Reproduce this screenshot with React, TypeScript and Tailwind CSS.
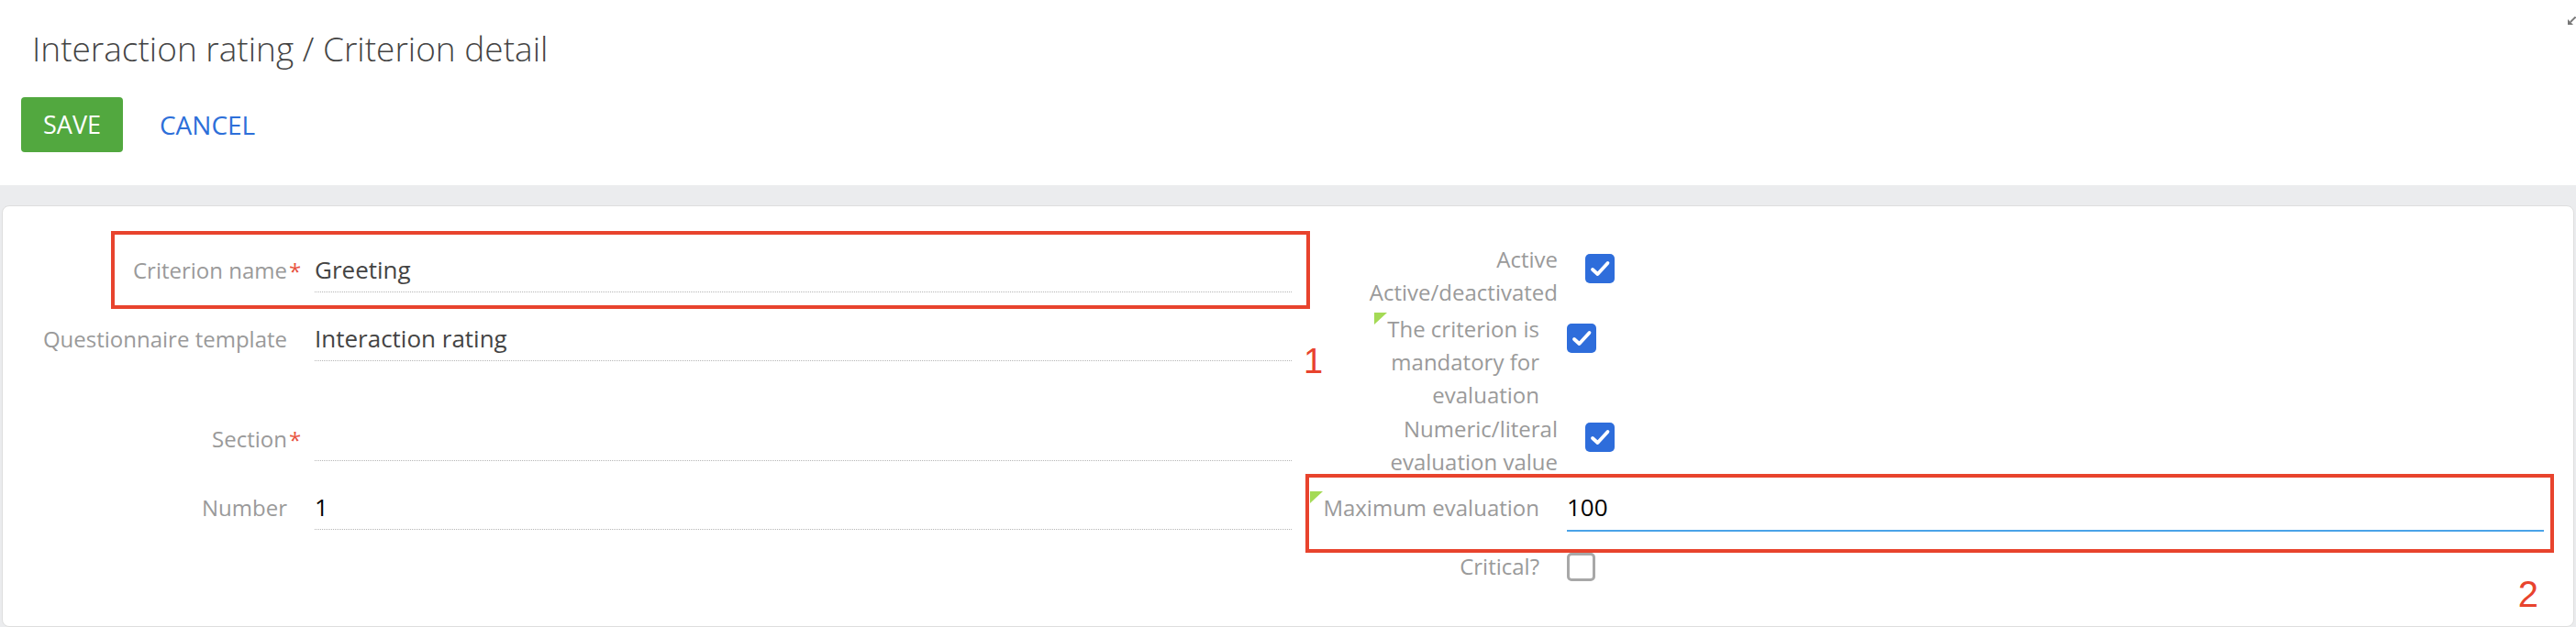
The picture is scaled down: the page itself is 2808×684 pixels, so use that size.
import type { ReactNode } from "react";

const labelText = "text-[24px] leading-[36px] text-[#9a9a9a]";
const redFrame = "pointer-events-none absolute border-4 border-[#e8432d]";
const annotation =
  "pointer-events-none absolute font-['Liberation_Sans',Arial,sans-serif] leading-none text-[#e8432d]";

function Required() {
  return <span className="absolute left-full top-0 ml-[2px] text-[#e8533f]">*</span>;
}

// little green marker shown before labels that carry a hint
function Hint() {
  return (
    <span className="relative inline-block h-0 w-0 align-top">
      <svg className="absolute right-0 top-0" width="14" height="13" viewBox="0 0 14 13">
        <polygon points="0,0 14,0 0,13" fill="#a4da55" />
      </svg>
    </span>
  );
}

function CheckBox({ checked, className = "" }: { checked: boolean; className?: string }) {
  if (!checked) {
    return (
      <span
        className={`block h-[31px] w-[31px] shrink-0 rounded-[5px] border-[3px] border-[#a8a8a8] bg-white ${className}`}
      />
    );
  }
  return (
    <span className={`block h-[32px] w-[32px] shrink-0 rounded-[5px] bg-[#2e6ddb] ${className}`}>
      <svg viewBox="0 0 32 32" className="h-full w-full">
        <path
          d="M8 17l5.5 5L24.5 10"
          fill="none"
          stroke="#fff"
          strokeWidth="3.8"
          strokeLinecap="round"
          strokeLinejoin="round"
        />
      </svg>
    </span>
  );
}

function TextRow({
  label,
  value,
  required,
  dark,
  className = "",
  children,
}: {
  label: string;
  value: string;
  required?: boolean;
  dark?: boolean;
  className?: string;
  children?: ReactNode;
}) {
  return (
    <div className={`relative flex items-baseline ${className}`}>
      <div className={`w-[270px] shrink-0 whitespace-nowrap text-right ${labelText}`}>
        <span className="relative">
          {label}
          {required && <Required />}
        </span>
      </div>
      <div
        className={`ml-[30px] flex-1 border-b border-dotted border-[#b5b5b5] pb-[6px] text-[26px] leading-[36px] ${
          dark ? "text-black" : "text-[#444]"
        }`}
      >
        {value || "\u00a0"}
      </div>
      {children}
    </div>
  );
}

function FlagRow({
  lines,
  checked,
  hint,
  className = "",
  boxClass,
}: {
  lines: string[];
  checked: boolean;
  hint?: boolean;
  className?: string;
  boxClass: string;
}) {
  return (
    <div className={`flex items-start ${className}`}>
      <div className={`w-[238px] shrink-0 whitespace-nowrap text-right ${labelText}`}>
        {lines.map((line, i) => (
          <div key={i}>
            {i === 0 && hint && <Hint />}
            {line}
          </div>
        ))}
      </div>
      <CheckBox checked={checked} className={`ml-[30px] ${boxClass}`} />
    </div>
  );
}

export default function App() {
  return (
    <div className="h-[684px] overflow-hidden bg-[#ebecee] font-['Open_Sans',sans-serif]">
      <header className="relative h-[202px] bg-white px-[23px]">
        <h1 className="pl-[12px] pt-[31px] text-[37px] font-light leading-[44px] text-[#444]">
          Interaction rating / Criterion detail
        </h1>
        <div className="mt-[31px] flex items-center gap-4">
          <button
            type="button"
            className="h-[60px] rounded-[4px] bg-[#52a83f] px-[24px] text-[27px] text-white"
          >
            SAVE
          </button>
          <button type="button" className="h-[60px] px-[24px] text-[28px] text-[#2d6fd9]">
            CANCEL
          </button>
        </div>
        <svg
          className="absolute right-0 top-[18px]"
          width="9"
          height="9"
          viewBox="0 0 9 9"
        >
          <path d="M8.5 0.5L3 6" stroke="#777" strokeWidth="1.8" />
          <polygon points="0,3 0,9 6,9" fill="#777" />
        </svg>
      </header>

      <div className="px-[2px] pt-[22px]">
        <div className="h-[460px] rounded-[8px] border border-[#dedede] bg-white">
          <div className="grid grid-cols-[1365px_1333px] gap-x-[32px] pl-[40px] pt-[40px]">
            <div className="flex flex-col">
              <TextRow className="mt-[11px]" label="Criterion name" value="Greeting" required>
                <div className={`${redFrame} -bottom-[18px] -right-[20px] -top-[24px] left-[78px]`} />
              </TextRow>
              <TextRow className="mt-[32px]" label="Questionnaire template" value="Interaction rating">
                <span className={`${annotation} left-full top-[24px] ml-[13px] text-[38px]`}>1</span>
              </TextRow>
              <TextRow className="mt-[66px]" label="Section" value="" required />
              <TextRow className="mt-[32px]" label="Number" value="1" dark />
            </div>

            <div className="flex flex-col">
              <FlagRow
                className="ml-[20px]"
                lines={["Active", "Active/deactivated"]}
                checked
                boxClass="mt-[12px]"
              />
              <FlagRow
                className="mt-[4px]"
                lines={["The criterion is", "mandatory for", "evaluation"]}
                checked
                hint
                boxClass="mt-[12px]"
              />
              <FlagRow
                className="ml-[20px] mt-[1px]"
                lines={["Numeric/literal", "evaluation value"]}
                checked
                boxClass="mt-[11px]"
              />
              <div className="relative mt-[13px] flex items-baseline">
                <div className={`w-[238px] shrink-0 whitespace-nowrap text-right ${labelText}`}>
                  <Hint />
                  Maximum evaluation
                </div>
                <div className="ml-[30px] flex-1 border-b-2 border-[#4aa3e8] pb-[7px] text-[26px] leading-[36px] text-black">
                  100
                </div>
                <div className={`${redFrame} -bottom-[23px] -left-[17px] -right-[11px] -top-[18px]`} />
                <span className={`${annotation} right-[6px] top-[93px] text-[40px]`}>2</span>
              </div>
              <FlagRow className="mt-[20px]" lines={["Critical?"]} checked={false} boxClass="mt-[3px]" />
            </div>
          </div>
        </div>
      </div>
    </div>
  );
}
